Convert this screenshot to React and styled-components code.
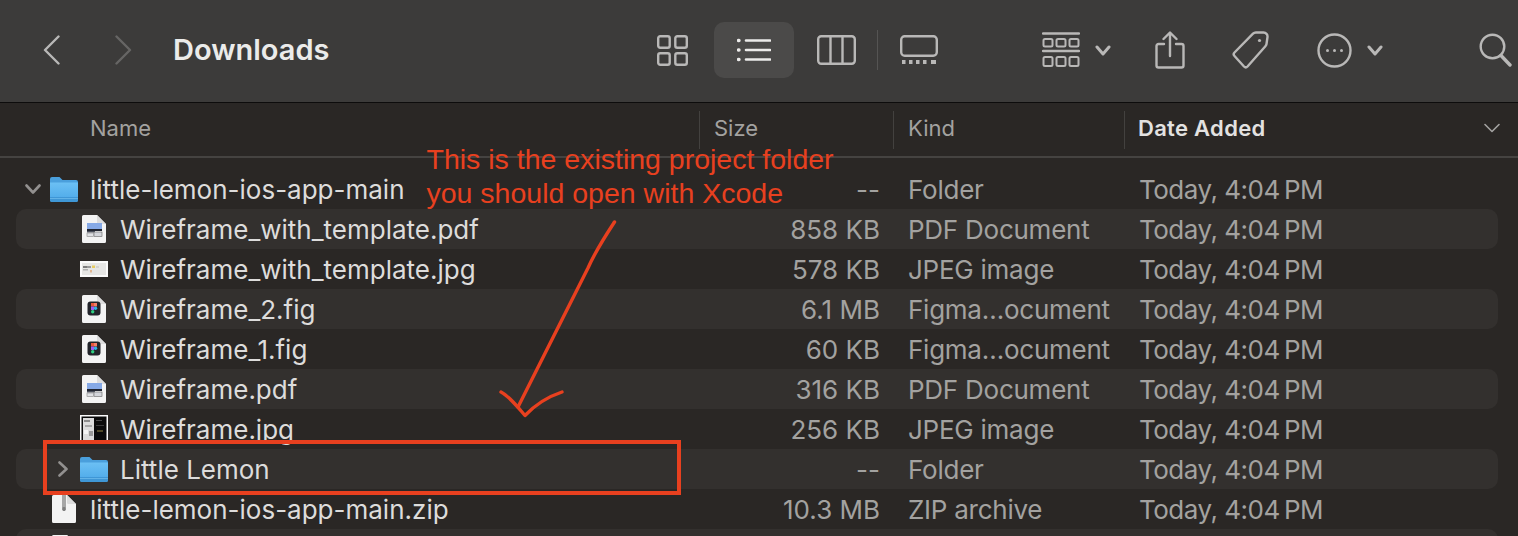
import React from "react";
import styled, { createGlobalStyle } from "styled-components";

const GlobalStyle = createGlobalStyle`
  * {
    box-sizing: border-box;
  }

  html, body {
    margin: 0;
    padding: 0;
    height: 100%;
    background: #2a2725;
  }

  #root {
    height: 536px;
    overflow: hidden;
  }
`;

const RED = "#e8401f";

const Window = styled.div`
  position: relative;
  width: 1518px;
  height: 536px;
  overflow: hidden;
  background: #2a2725;
  font-family: Inter, "Liberation Sans", sans-serif;
`;

const Toolbar = styled.header`
  display: flex;
  align-items: center;
  height: 103px;
  padding: 0 0 2px 43px;
  background: #3c3b3a;
  border-bottom: 1px solid #0d0c0c;
`;

const Title = styled.h1`
  margin: 0 0 2px 41px;
  width: 484px;
  font-size: 29px;
  font-weight: 600;
  color: #ebebea;
`;

const ViewButton = styled.div`
  display: flex;
  align-items: center;
  justify-content: center;
  width: 80px;
  height: 56px;
  margin-left: ${(p) => p.$left}px;
  border-radius: 10px;
  background: #4b4a49;
`;

const Divider = styled.div`
  width: 1px;
  height: 40px;
  margin-left: ${(p) => p.$left}px;
  background: #555453;
`;

const ToolIcon = styled.svg`
  flex: none;
  display: block;
  margin-left: ${(p) => p.$left || 0}px;
  margin-right: ${(p) => p.$right || 0}px;
  fill: none;
  stroke: ${(p) => p.$color || "#b9b8b7"};
  stroke-width: ${(p) => p.$weight || 2.4};
  stroke-linecap: round;
  stroke-linejoin: round;
`;

const ColumnHeader = styled.div`
  display: grid;
  grid-template-columns: 699px 194px 231px 1fr;
  align-items: center;
  height: 55px;
  background: #2a2725;
  border-bottom: 2px solid #454341;
`;

const HeaderCell = styled.div`
  display: flex;
  align-items: center;
  justify-content: space-between;
  height: 38px;
  padding-left: ${(p) => p.$pad}px;
  padding-bottom: 4px;
  font-size: 22px;
  font-weight: ${(p) => (p.$active ? 600 : 400)};
  letter-spacing: ${(p) => (p.$active ? 0.3 : 0)}px;
  color: ${(p) => (p.$active ? "#e3e2e1" : "#a3a2a0")};
  border-left: ${(p) => (p.$first ? "none" : "1px solid #43413f")};
`;

const FileList = styled.div`
  padding: 11px 20px 0 16px;
`;

const Row = styled.div`
  display: grid;
  grid-template-columns: 683px 194px 231px 1fr;
  align-items: center;
  height: 40px;
  border-radius: 10px;
  background: ${(p) => (p.$striped ? "#33302e" : "transparent")};
  font-size: 26px;
  white-space: nowrap;
`;

const NameCell = styled.div`
  display: flex;
  align-items: center;
  height: 40px;
  padding-left: ${(p) => p.$depth * 30 + 8}px;
  color: #dddcdb;
`;

const Disclosure = styled.div`
  display: flex;
  align-items: center;
  justify-content: center;
  flex: none;
  width: 18px;
  margin-right: 8px;
`;

const IconSlot = styled.div`
  display: flex;
  align-items: center;
  justify-content: center;
  flex: none;
  width: 28px;
  height: 40px;
  margin-right: 12px;
`;

const SizeCell = styled.div`
  padding-right: 13px;
  text-align: right;
  color: #a3a2a0;
`;

const TextCell = styled.div`
  padding-left: 15px;
  letter-spacing: ${(p) => p.$tracking}px;
  color: #a3a2a0;
`;

const Annotation = styled.div`
  position: absolute;
  left: 426.500px;
  top: 142px;
  font-family: "Liberation Sans", Arial, sans-serif;
  font-size: 28.5px;
  line-height: 34px;
  color: ${RED};
  white-space: nowrap;
`;

const Highlight = styled.div`
  position: absolute;
  left: 43px;
  top: 440px;
  width: 638px;
  height: 55px;
  border: 4px solid ${RED};
`;

const ArrowLayer = styled.svg`
  position: absolute;
  left: 490px;
  top: 215px;
  fill: none;
  stroke: ${RED};
  stroke-width: 3.4;
  stroke-linecap: round;
  stroke-linejoin: round;
`;

const FolderIcon = () => (
  <svg width="28" height="26" viewBox="0 0 28 26">
    <defs>
      <linearGradient id="folderFace" x1="0" y1="0" x2="0" y2="1">
        <stop offset="0" stopColor="#6cc0f4" />
        <stop offset="1" stopColor="#4ba8e8" />
      </linearGradient>
    </defs>
    <path d="M0 3a2 2 0 0 1 2-2h7.500l3 3H26a2 2 0 0 1 2 2v4H0z" fill="#4a9fdc" />
    <path d="M0 6.500h28V24a2 2 0 0 1-2 2H2a2 2 0 0 1-2-2z" fill="url(#folderFace)" />
    <path d="M0 21h28v3a2 2 0 0 1-2 2H2a2 2 0 0 1-2-2z" fill="#3f97d6" />
    <rect x="0" y="22" width="28" height="1" fill="#7cc6f2" opacity="0.6" />
  </svg>
);

const PageShape = () => (
  <>
    <path d="M1.500 0H15l9 9v17.500a1.500 1.500 0 0 1-1.500 1.500h-21A1.500 1.500 0 0 1 0 26.500V1.500A1.500 1.500 0 0 1 1.500 0z" fill="#f3f3f3" />
    <path d="M15 0l9 9h-7.500A1.500 1.500 0 0 1 15 7.500z" fill="#dcdcdc" />
  </>
);

const PdfIcon = () => (
  <svg width="24" height="28" viewBox="0 0 24 28">
    <PageShape />
    <rect x="5" y="8" width="15" height="6" fill="#86a9e6" />
    <rect x="5" y="14" width="15" height="2" fill="#20242f" />
    <rect x="5" y="16" width="8" height="1.500" fill="#4a4f5c" />
    <rect x="12" y="17" width="8" height="4.500" fill="#d3d5da" stroke="#666" strokeWidth="0.6" />
    <rect x="5" y="18" width="6.500" height="3.500" fill="#dfe0e3" stroke="#888" strokeWidth="0.6" />
  </svg>
);

const FigIcon = () => (
  <svg width="24" height="28" viewBox="0 0 24 28">
    <PageShape />
    <rect x="5.500" y="6.500" width="13" height="14" rx="3" fill="#22242a" />
    <rect x="9" y="8" width="3" height="3.500" fill="#e8553a" />
    <rect x="12" y="8" width="3" height="3.500" fill="#f47c66" />
    <rect x="9" y="11.500" width="3" height="3.500" fill="#a05bf0" />
    <circle cx="13.500" cy="13.200" r="1.700" fill="#2fb4ea" />
    <circle cx="10.700" cy="16.700" r="1.700" fill="#2fcf83" />
  </svg>
);

const ZipIcon = () => (
  <svg width="24" height="28" viewBox="0 0 24 28">
    <PageShape />
    <rect x="10" y="0" width="4" height="15" fill="#a6a6a6" />
    <rect x="10.500" y="12" width="3" height="4" rx="1" fill="#7d7d7d" />
  </svg>
);

const WideThumb = () => (
  <svg width="28" height="16" viewBox="0 0 28 16">
    <rect width="28" height="16" fill="#fbfbfb" />
    <rect x="2" y="2" width="24" height="12" fill="#e6e6e4" />
    <rect x="3" y="5" width="4" height="2" fill="#7c7c7c" />
    <rect x="7" y="5" width="4" height="2" fill="#9a9a9a" />
    <rect x="12" y="4.500" width="3" height="2.500" fill="#e6cc60" />
    <rect x="16" y="5" width="3" height="2" fill="#d2d2d0" />
    <rect x="3" y="8" width="5" height="1.500" fill="#b0b0b0" />
    <rect x="10" y="9" width="2" height="2.500" fill="#e2b792" />
  </svg>
);

const TallThumb = () => (
  <svg width="28" height="28" viewBox="0 0 28 28">
    <rect width="28" height="28" fill="#fbfbfb" />
    <rect x="1.500" y="1.500" width="25" height="25" fill="#0b0b0b" />
    <rect x="3" y="3" width="11" height="23" fill="#dcdcdc" />
    <rect x="4" y="5" width="6" height="2" fill="#8a8a8a" />
    <rect x="5" y="10" width="7" height="2" fill="#a8a8a8" />
    <rect x="4" y="15" width="4" height="4" fill="#f5f5f5" />
    <rect x="9" y="16" width="4" height="5" fill="#9a9a9a" />
    <rect x="16" y="5" width="6" height="1" fill="#4a4a4a" />
    <rect x="16" y="10" width="8" height="1" fill="#3a3a3a" />
    <rect x="17" y="15" width="6" height="2" fill="#4f4828" />
  </svg>
);

const FILE_ICONS = {
  folder: FolderIcon,
  pdf: PdfIcon,
  fig: FigIcon,
  zip: ZipIcon,
  wide: WideThumb,
  tall: TallThumb,
};

const files = [
  { name: "little-lemon-ios-app-main", size: "--", kind: "Folder", icon: "folder", depth: 0, open: true },
  { name: "Wireframe_with_template.pdf", size: "858 KB", kind: "PDF Document", icon: "pdf", depth: 1 },
  { name: "Wireframe_with_template.jpg", size: "578 KB", kind: "JPEG image", icon: "wide", depth: 1 },
  { name: "Wireframe_2.fig", size: "6.1 MB", kind: "Figma…ocument", icon: "fig", depth: 1 },
  { name: "Wireframe_1.fig", size: "60 KB", kind: "Figma…ocument", icon: "fig", depth: 1 },
  { name: "Wireframe.pdf", size: "316 KB", kind: "PDF Document", icon: "pdf", depth: 1 },
  { name: "Wireframe.jpg", size: "256 KB", kind: "JPEG image", icon: "tall", depth: 1 },
  { name: "Little Lemon", size: "--", kind: "Folder", icon: "folder", depth: 1, open: false },
  { name: "little-lemon-ios-app-main.zip", size: "10.3 MB", kind: "ZIP archive", icon: "zip", depth: 0 },
  { name: "", size: "", kind: "", icon: "pdf", depth: 0 },
];

const SmallChevron = ({ left }) => (
  <ToolIcon $left={left} width="16" height="11" viewBox="0 0 16 11" $weight="3">
    <path d="M2 2l6 7 6-7" />
  </ToolIcon>
);

const FileRow = ({ file, striped }) => {
  const Icon = FILE_ICONS[file.icon];
  return (
    <Row $striped={striped}>
      <NameCell $depth={file.depth}>
        <Disclosure>
          {file.open === true && (
            <ToolIcon width="16" height="10" viewBox="0 0 16 10" $color="#92908f" $weight="2.6">
              <path d="M1.500 1.500L8 8.500l6.500-7" />
            </ToolIcon>
          )}
          {file.open === false && (
            <ToolIcon width="10" height="16" viewBox="0 0 10 16" $color="#92908f" $weight="2.6">
              <path d="M1.500 1.500L8.500 8l-7 6.500" />
            </ToolIcon>
          )}
        </Disclosure>
        <IconSlot>
          <Icon />
        </IconSlot>
        {file.name}
      </NameCell>
      <SizeCell>{file.size}</SizeCell>
      <TextCell $tracking={-0.25}>{file.kind}</TextCell>
      <TextCell $tracking={-0.5}>{file.kind ? "Today, 4:04\u2009PM" : ""}</TextCell>
    </Row>
  );
};

export default function App() {
  return (
    <>
      <GlobalStyle />
      <Window>
        <Toolbar>
          <ToolIcon width="17" height="30" viewBox="0 0 17 30">
            <path d="M15.500 1.500L2 15l13.500 13.500" />
          </ToolIcon>
          <ToolIcon $left={55} width="17" height="30" viewBox="0 0 17 30" $color="#666564">
            <path d="M1.500 1.500L15 15 1.500 28.500" />
          </ToolIcon>
          <Title>Downloads</Title>
          <ToolIcon width="31" height="31" viewBox="0 0 31 31">
            <rect x="1.200" y="1.200" width="11.500" height="11.500" rx="2" />
            <rect x="18.300" y="1.200" width="11.500" height="11.500" rx="2" />
            <rect x="1.200" y="18.300" width="11.500" height="11.500" rx="2" />
            <rect x="18.300" y="18.300" width="11.500" height="11.500" rx="2" />
          </ToolIcon>
          <ViewButton $left={26}>
            <ToolIcon width="34" height="24" viewBox="0 0 34 24" $color="#ecebea" $weight="2.6">
              <path d="M9 2.500h24M9 12h24M9 21.500h24" />
              <path d="M1.500 2.500h.5M1.500 12h.5M1.500 21.500h.5" strokeWidth="3.400" />
            </ToolIcon>
          </ViewButton>
          <ToolIcon $left={23} width="39" height="30" viewBox="0 0 39 30">
            <rect x="1.200" y="1.200" width="36.600" height="27.600" rx="3" />
            <path d="M13.500 1.200v27.600M25.500 1.200v27.600" />
          </ToolIcon>
          <Divider $left={21} />
          <ToolIcon $left={22} width="38" height="30" viewBox="0 0 38 30">
            <rect x="1.200" y="1.200" width="35.600" height="19.600" rx="3.500" />
            <path d="M2 27h3.500M9 27h3.500M16 27h3.500M23 27h3.500M31 27h5" strokeWidth="4" strokeLinecap="butt" />
          </ToolIcon>
          <ToolIcon $left={104} width="38" height="36" viewBox="0 0 38 36">
            <path d="M1 1.500h36M1 19h36" />
            <rect x="1.500" y="7" width="9" height="7.500" rx="1.500" strokeWidth="2" />
            <rect x="14.500" y="7" width="9" height="7.500" rx="1.500" strokeWidth="2" />
            <rect x="27.500" y="7" width="9" height="7.500" rx="1.500" strokeWidth="2" />
            <rect x="1.500" y="25" width="9" height="9" rx="1.500" strokeWidth="2" />
            <rect x="14.500" y="25" width="9" height="9" rx="1.500" strokeWidth="2" />
            <rect x="27.500" y="25" width="9" height="9" rx="1.500" strokeWidth="2" />
          </ToolIcon>
          <SmallChevron left={15} />
          <ToolIcon $left={44} width="30" height="38" viewBox="0 0 30 38">
            <path d="M9 13H3.500a2 2 0 0 0-2 2v19.500a2 2 0 0 0 2 2h23a2 2 0 0 0 2-2V15a2 2 0 0 0-2-2H21" />
            <path d="M15 25V2M8.500 8L15 1.500 21.500 8" />
          </ToolIcon>
          <ToolIcon $left={47} width="38" height="38" viewBox="0 0 38 38">
            <path d="M24 1.500h7.500a4 4 0 0 1 4 4.500l-1 7a4 4 0 0 1-1.100 2.200L15.500 35.500a2.500 2.500 0 0 1-3.500 0L2.500 25a2.500 2.500 0 0 1 0-3.500L21 2.700A4 4 0 0 1 24 1.500z" />
            <circle cx="27.500" cy="9.500" r="1.600" fill="#b9b8b7" stroke="none" />
          </ToolIcon>
          <ToolIcon $left={47} width="35" height="35" viewBox="0 0 35 35">
            <circle cx="17.500" cy="17.500" r="16" />
            <circle cx="10.500" cy="17.500" r="1.500" fill="#b9b8b7" stroke="none" />
            <circle cx="17.500" cy="17.500" r="1.500" fill="#b9b8b7" stroke="none" />
            <circle cx="24.500" cy="17.500" r="1.500" fill="#b9b8b7" stroke="none" />
          </ToolIcon>
          <SmallChevron left={15} />
          <ToolIcon $left={96} width="33" height="34" viewBox="0 0 33 34">
            <circle cx="13.500" cy="13.500" r="11.800" />
            <path d="M22 22.500L31 32" strokeWidth="3.400" />
          </ToolIcon>
        </Toolbar>

        <ColumnHeader>
          <HeaderCell $first $pad={90}>Name</HeaderCell>
          <HeaderCell $pad={14}>Size</HeaderCell>
          <HeaderCell $pad={14}>Kind</HeaderCell>
          <HeaderCell $pad={13} $active>
            Date Added
            <ToolIcon width="16" height="10" viewBox="0 0 16 10" $color="#a3a2a0" $weight="1.600" $right={18}>
              <path d="M1 1.500l7 7 7-7" />
            </ToolIcon>
          </HeaderCell>
        </ColumnHeader>

        <FileList>
          {files.map((file, i) => (
            <FileRow key={i} file={file} striped={i % 2 === 1} />
          ))}
        </FileList>

        <Annotation>
          This is the existing project folder
          <br />
          you should open with Xcode
        </Annotation>
        <Highlight />
        <ArrowLayer width="130" height="210" viewBox="490 215 130 210">
          <path d="M614.500 222C604 238 596 250 588 268L518 407" />
          <path d="M501 392C509 396 516 405 525 415.500C535 405 547 397 562 392" />
        </ArrowLayer>
      </Window>
    </>
  );
}
